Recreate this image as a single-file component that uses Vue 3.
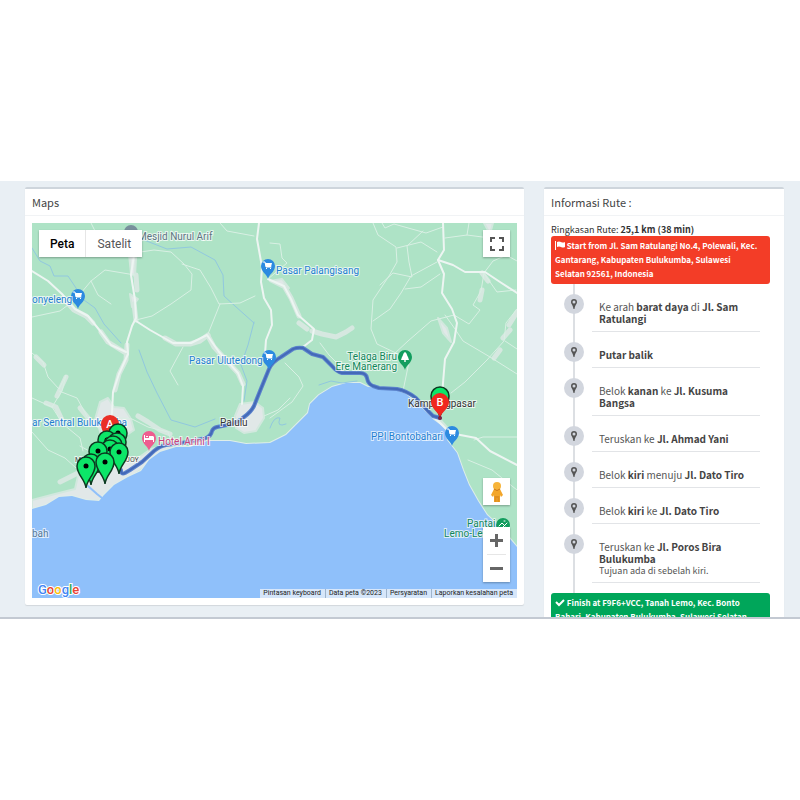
<template>
  <div class="screen">
    <main class="content">
      <section class="box">
        <h2 class="box-title">Maps</h2>
        <div class="box-body">
          <div class="map">
            <svg class="map-canvas" viewBox="32 223 485 375" preserveAspectRatio="xMidYMid slice" role="img" aria-label="Peta rute">
              <rect x="32" y="223" width="485" height="375" fill="#aee3c6" />
              <path v-for="(d, i) in urban" :key="'u' + i" :d="d" class="urban" />
              <path v-for="(d, i) in villages" :key="'v' + i" :d="d" class="village" />
              <path class="shore" :d="coast" />
              <path class="sea" :d="coast + ' L517 599 L32 599 Z'" />
              <path class="river" d="M88 486 L97 494 L102 498" />
              <path v-for="(d, i) in rivers" :key="'r' + i" :d="d" class="stream" />
              <path v-for="(d, i) in minorRoads" :key="'m' + i" :d="d" class="minor" />
              <path v-for="(d, i) in mainRoads" :key="'h' + i" :d="d" class="major" />

              <path class="route" :d="route" />
              <path class="route-core" :d="route" />

              <circle cx="131" cy="232" r="7" fill="#78909c" />
              <g v-for="p in places" :key="p.x + '-' + p.y" :transform="`translate(${p.x} ${p.y})`">
                <path d="M0 10 C-1 5 -7 3 -7 -3 A7 7 0 0 1 7 -3 C7 3 1 5 0 10 Z" :fill="p.color" />
                <template v-if="p.kind === 'shop'">
                  <path d="M-5 -7 H-3 L-2 -2 H3" class="glyph" />
                  <path d="M-3 -6 H4 L3 -2 H-2 Z M-2 -1 h1 v1 h-1 Z M2 -1 h1 v1 h-1 Z" fill="#fff" />
                </template>
                <path v-else-if="p.kind === 'hotel'" d="M-5 -6 H-4 V-3 H0 V-5 H4 L5 -4 V1 H4 V-1 H-4 V1 H-5 Z M-3 -5 H-1 V-4 H-3 Z" fill="#fff" />
                <path v-else d="M0 -8 C2 -7 2 -4 3 -3 L4 0 H.7 V2 H-.7 V0 H-4 L-3 -3 C-2 -4 -2 -7 0 -8 Z" fill="#fff" />
              </g>
              <circle cx="503" cy="525" r="7" fill="#129d5e" />
              <path d="M499 526 l3 -3 l3 3 M502 528 l5 -5 M504 521 h1" class="glyph" />

              <g class="labels">
                <text
                  v-for="l in labels"
                  :key="l.text"
                  :x="l.x"
                  :y="l.y"
                  :fill="l.color"
                  :class="{ small: l.small }"
                  :text-anchor="l.anchor || 'start'"
                >{{ l.text }}</text>
              </g>

              <g transform="translate(110 424)">
                <path :d="pinShape" fill="#ea2f26" />
                <text class="pin-letter" x="0" y="4">A</text>
              </g>
              <g v-for="(m, i) in markers" :key="'p' + i" :transform="`translate(${m[0]} ${m[1]})`">
                <path :d="pinShape" class="green-pin" />
                <circle r="2.5" />
              </g>
              <g transform="translate(440 402)">
                <path d="M0 16 C-1 10 -9 7 -9 0 A9 9 0 0 1 9 0 C9 7 1 10 0 16 Z" fill="#f0281e" />
                <text class="pin-letter" x="0" y="4">B</text>
              </g>
              <circle cx="440" cy="418" r="2" fill="#7b2440" />

              <text class="google" x="38" y="594">
                <tspan fill="#4285f4">G</tspan><tspan fill="#ea4335">o</tspan><tspan fill="#fbbc05">o</tspan><tspan fill="#4285f4">g</tspan><tspan fill="#34a853">l</tspan><tspan fill="#ea4335">e</tspan>
              </text>
            </svg>

            <div class="map-types">
              <button type="button" class="active">Peta</button>
              <button type="button">Satelit</button>
            </div>
            <button type="button" class="map-btn fullscreen" aria-label="Layar penuh">
              <svg viewBox="0 0 14 14" width="14" height="14">
                <path d="M1 5 V1 H5 M9 1 H13 V5 M13 9 V13 H9 M5 13 H1 V9" fill="none" stroke="#555" stroke-width="2" />
              </svg>
            </button>
            <button type="button" class="map-btn pegman" aria-label="Street View">
              <svg viewBox="0 0 14 22" width="14" height="22">
                <path d="M4 8 H10 L13 14 L11 16 L10 14 V21 H4 V14 L3 16 L1 14 Z" fill="#f3a62b" />
                <path d="M4.500 15 H9.500 V21 H7.500 V17 H6.500 V21 H4.500 Z" fill="#e08f21" />
                <circle cx="7" cy="5" r="4" fill="#f7b43a" />
                <path d="M4 8 Q7 11 10 8" fill="none" stroke="#c9761b" />
              </svg>
            </button>
            <div class="zoom">
              <button type="button" aria-label="Perbesar">
                <svg viewBox="0 0 13 13" width="13" height="13"><path d="M0 6.5 H13 M6.5 0 V13" stroke="#666" stroke-width="3" /></svg>
              </button>
              <button type="button" aria-label="Perkecil">
                <svg viewBox="0 0 13 13" width="13" height="13"><path d="M0 6.5 H13" stroke="#666" stroke-width="3" /></svg>
              </button>
            </div>
            <div class="attribution">
              <button type="button">Pintasan keyboard</button>
              <span>Data peta ©2023</span>
              <a href="#">Persyaratan</a>
              <a href="#">Laporkan kesalahan peta</a>
            </div>
          </div>
        </div>
      </section>

      <section class="box">
        <h2 class="box-title">Informasi Rute :</h2>
        <div class="box-body">
          <p class="summary">Ringkasan Rute: <b>25,1 km (38 min)</b></p>
          <div class="timeline">
            <div class="time-label start">
              <svg viewBox="0 0 10 9" width="10" height="9">
                <path d="M0 0 H1 V9 H0 Z M2 1 Q4 0 6 1 T10 1 V6 Q8 7 6 6 T2 6 Z" fill="currentColor" />
              </svg>
              Start from Jl. Sam Ratulangi No.4, Polewali, Kec.<br>
              Gantarang, Kabupaten Bulukumba, Sulawesi<br>
              Selatan 92561, Indonesia
            </div>
            <ol class="steps">
              <li v-for="(step, i) in steps" :key="i">
                <span class="step-icon">
                  <svg viewBox="0 0 8 10" width="8" height="10">
                    <path d="M4 0 A3 3 0 0 1 7 3 C7 5 5 6 4.500 10 H3.500 C3 6 1 5 1 3 A3 3 0 0 1 4 0 Z M4 1.500 A1.500 1.500 0 1 0 4 4.500 A1.500 1.500 0 1 0 4 1.500 Z" fill="#555" fill-rule="evenodd" />
                  </svg>
                </span>
                <div class="step-text">
                  <template v-for="(part, j) in step.parts" :key="j">
                    <b v-if="j % 2">{{ part }}</b>
                    <template v-else>{{ part }}</template>
                  </template>
                  <small v-if="step.note">{{ step.note }}</small>
                </div>
              </li>
            </ol>
            <div class="time-label finish">
              <svg viewBox="0 0 10 9" width="10" height="9">
                <path d="M1 4 L4 7 L9 2" fill="none" stroke="currentColor" stroke-width="2" />
              </svg>
              Finish at F9F6+VCC, Tanah Lemo, Kec. Bonto<br>
              Bahari, Kabupaten Bulukumba, Sulawesi Selatan
            </div>
          </div>
        </div>
      </section>
    </main>
  </div>
</template>

<script setup>
const blue = '#1f7fd1'
const green = '#12875a'

// odd entries are emphasised
const steps = [
  { parts: ['Ke arah ', 'barat daya', ' di ', 'Jl. Sam Ratulangi'] },
  { parts: ['', 'Putar balik'] },
  { parts: ['Belok ', 'kanan', ' ke ', 'Jl. Kusuma Bangsa'] },
  { parts: ['Teruskan ke ', 'Jl. Ahmad Yani'] },
  { parts: ['Belok ', 'kiri', ' menuju ', 'Jl. Dato Tiro'] },
  { parts: ['Belok ', 'kiri', ' ke ', 'Jl. Dato Tiro'] },
  { parts: ['Teruskan ke ', 'Jl. Poros Bira Bulukumba'], note: 'Tujuan ada di sebelah kiri.' }
]

const pinShape = 'M0 22 C-1 13 -9 9 -9 0 A9 9 0 0 1 9 0 C9 9 1 13 0 22 Z'

const markers = [
  [118, 433], [107, 440], [117, 442], [113, 445], [110, 449],
  [98, 451], [119, 452], [91, 463], [105, 462], [86, 466],
  [440, 396]
]

const places = [
  { x: 268, y: 269, kind: 'shop', color: '#2c8ae0' },
  { x: 78, y: 299, kind: 'shop', color: '#2c8ae0' },
  { x: 269, y: 360, kind: 'shop', color: '#2c8ae0' },
  { x: 452, y: 436, kind: 'shop', color: '#2c8ae0' },
  { x: 149, y: 441, kind: 'hotel', color: '#ee5d8f' },
  { x: 405, y: 360, kind: 'park', color: '#129d5e' }
]

const labels = [
  { text: 'Mesjid Nurul Arif', x: 138, y: 240, color: '#5d7482' },
  { text: 'Pasar Palangisang', x: 276, y: 274, color: blue },
  { text: 'onyeleng', x: 32, y: 303, color: blue },
  { text: 'Pasar Ulutedong', x: 189, y: 364, color: blue },
  { text: 'Telaga Biru', x: 397, y: 360, color: green, anchor: 'end' },
  { text: 'Ere Manerang', x: 397, y: 370, color: green, anchor: 'end' },
  { text: 'ar Sentral Bulukumba', x: 32, y: 426, color: blue },
  { text: 'Palulu', x: 220, y: 426, color: '#333' },
  { text: 'Hotel Arini I', x: 158, y: 445, color: '#c8437c' },
  { text: 'Kampungpasar', x: 408, y: 407, color: '#333' },
  { text: 'PPI Bontobahari', x: 443, y: 440, color: blue, anchor: 'end' },
  { text: 'Pantai', x: 467, y: 527, color: green },
  { text: 'Lemo-Lemo', x: 444, y: 537, color: green },
  { text: 'MATTOANGING JOY', x: 75, y: 462, color: '#444', small: true },
  { text: 'bah', x: 32, y: 537, color: '#56799a' }
]

const coast = 'M32 509 L46 505 L59 497 L72 496 L86 500 L99 501 L104 495 L114 485 L128 477 L141 471 L149 460 L160 452 L176 447 L190 447 L207 441 L230 441 L246 444 L270 443 L286 435 L296 425 L308 413 L310 404 L319 395 L332 387 L346 383 L360 383 L368 387 L390 388 L406 394 L421 407 L434 420 L445 428 L447 440 L457 453 L463 470 L469 485 L478 501 L487 515 L500 527 L517 547'

const route = 'M121 470 Q121 475 125 473 L130 470 L142 462 L154 451 Q160 446 166 445 L188 442 L206 438 Q211 436 212 431 Q213 428 217 427 L232 424 Q240 421 244 417 Q251 412 254 406 L260 391 L269 369 Q272 362 281 357 L293 349 Q298 347 303 348 L312 354 L323 357 L332 366 Q337 372 342 373 H360 Q366 373 367 378 Q368 384 373 386 L379 388 L397 389 Q407 391 416 398 L428 411 L433 416 L440 418'

const urban = [
  'M100 402 L108 398 L114 407 L124 408 L131 419 L134 430 L124 437 L116 450 L103 442 L99 428 L94 423 Z',
  'M240 404 L255 402 L263 408 L264 418 L256 431 L244 433 L236 428 L235 416 Z',
  'M32 500 L55 494 L75 489 L80 467 L96 455 L125 455 L132 462 L151 449 L180 442 L165 451 L130 478 L103 501 L60 500 L32 512 Z',
  'M129 254 L136 258 L135 276 L131 274 Z',
  'M130 294 L138 299 L132 307 Z',
  'M438 318 L447 328 L451 342 L443 333 Z',
  'M270 281 L282 279 L289 288 L282 287 Z',
  'M484 223 L493 223 L490 234 Z',
  'M434 418 L438 417 L451 432 L449 436 Z'
]

// built-up strips along the roads
const villages = [
  'M165 338 L176 344 L190 344 L200 341 L208 335',
  'M208 336 L214 347 L226 360 L238 373 L243 384',
  'M299 323 L307 329 M312 331 L322 334 L336 337 L346 332 L352 328',
  'M65 300 L74 310 L86 316 L93 323',
  'M101 332 L108 342 L124 352',
  'M127 345 L126 360 L119 374 L115 390',
  'M138 416 L148 422 L160 430 L170 434',
  'M36 357 L44 365 M57 396 L66 377',
  'M46 403 L56 407 L62 420 M80 408 L93 424',
  'M136 275 L137 290 M134 304 L136 320',
  'M284 286 L291 298 L299 316',
  'M482 273 L488 281 M482 290 L480 300',
  'M503 338 L510 330 M500 350 L494 358',
  'M517 312 L509 325',
  'M60 482 L80 472'
]

const mainRoads = [
  'M134 255 L131 275 L135 300 L136 318 L132 326 L127 342 L128 354 L119 374 L113 392 L112 413 L109 428',
  'M32 271 L48 281 L62 294 L75 309 L88 316 L101 332 L111 345 L126 352',
  'M136 321 L150 330 L173 343 L191 343 L207 335 L219 352 L238 373 L243 386 L242 404',
  'M259 223 L257 239 L262 267 L261 282 L264 298 L271 310 L272 325 L266 340 L265 354',
  'M268 279 L284 286 L291 299 L298 315 L314 329 L312 340 L303 347',
  'M443 223 L444 250 L438 260 L444 274 L442 293 L452 309 L457 323 L454 342 L445 359 L443 383 L441 417',
  'M438 260 L453 265 L465 272 L485 272 L500 282 L517 293',
  'M434 417 L450 433 L476 438 L490 451 L517 465'
]

const minorRoads = [
  'M91 223 L99 239 L118 252',
  'M134 253 L154 250 L171 252 L184 264 L192 274 L191 290 L171 304 L152 316 L136 320',
  'M182 264 L200 270 L211 288 L219 304 L240 303 L255 296',
  'M220 304 L214 319 L208 334',
  'M135 275 L105 270 L91 281 L76 299 L60 311 L32 317',
  'M91 281 L98 295 L111 304',
  'M32 353 L43 362 L48 377 L59 389 L66 375 L62 391 L52 407 L32 398',
  'M59 391 L77 398 L89 420 L101 429',
  'M32 432 L48 450 L65 458 L76 468',
  'M52 407 L63 424 L80 438 L83 451',
  'M111 417 L132 419 L148 427 L168 432 L173 446',
  'M183 347 L170 371 L178 385',
  'M220 223 L227 231 L254 236',
  'M270 243 L280 244 L282 258 L287 263 L268 279',
  'M373 223 L378 235 L396 247 L397 262 L389 276 L373 300 L371 329 L377 344 L398 354 L409 362 L403 391',
  'M373 321 L390 309 L401 293 L411 276 L437 262',
  'M382 223 L385 228 L394 224 L426 233 L443 227',
  'M397 248 L421 242 L437 252',
  'M423 231 L407 246 L409 262 L412 277 L393 273 L380 285',
  'M405 289 L421 287 L440 274',
  'M445 238 L467 235 L490 238 L506 255 L517 261',
  'M469 223 L467 235',
  'M484 273 L493 261 L509 254',
  'M484 273 L481 291 L473 305 L480 310 L469 324 L454 315 L431 321 L408 341 L394 354',
  'M483 272 L497 292 L516 290',
  'M445 315 L455 329 L463 341 L490 357 L517 374',
  'M451 393 L465 382 L487 360 L504 341 L506 323 L517 309',
  'M505 341 L517 349',
  'M285 363 L299 377 L303 386 L292 402 L270 418',
  'M517 437 L483 437 L474 440',
  'M468 460 L492 470 L517 490',
  'M264 416 L278 410 L290 398',
  'M320 343 L329 355 L337 363',
  'M80 446 L93 453 L108 460 L130 458'
]

const rivers = [
  'M32 248 L40 261 L50 266 L54 276 L68 276 L76 288 L84 300 L95 308 L104 324 L121 343',
  'M144 240 L167 249 L191 247 L215 260 L223 275 L224 296 L235 306 L254 323',
  'M254 322 L248 345 L241 365 L247 381 L244 401',
  'M139 350 L147 372 L157 393 L171 420 L195 427 L215 419',
  'M319 385 L331 381 L342 383 L357 381',
  'M270 428 Q274 416 280 418 Q276 428 286 424'
]
</script>

<style>
body {
  background: #ffffff;
}
</style>

<style scoped>
.screen {
  min-height: 100vh;
  display: grid;
  align-content: center;
  font-family: "Source Sans Pro", "Noto Sans CJK SC", sans-serif;
  color: #333333;
}

.content {
  box-sizing: border-box;
  display: grid;
  grid-template-columns: 499fr 240fr;
  align-items: start;
  gap: 20px;
  max-height: 438px;
  padding: 6px 16px 0 25px;
  overflow: hidden;
  background: #e9eff4;
  border-bottom: 2px solid #c3c9d2;
}

.box {
  background: #ffffff;
  border-top: 2px solid #ced5dc;
  border-radius: 2px;
  box-shadow: 0 1px 1px rgba(0, 0, 0, 0.1);
}

.box-title {
  margin: 0;
  padding: 0 7px;
  font-size: 11px;
  line-height: 26px;
  font-weight: 400;
  color: #444444;
  border-bottom: 1px solid #f1f3f5;
}

.box-body {
  padding: 7px;
}

.map {
  position: relative;
  height: 375px;
  overflow: hidden;
  font-family: Roboto, sans-serif;
}

.map-canvas {
  display: block;
  width: 100%;
  height: 100%;
}

.urban {
  fill: #e1e8e8;
  stroke: #d2e8de;
  stroke-width: 2;
  stroke-linejoin: round;
}

.village,
.shore,
.minor,
.major,
.river,
.stream,
.route,
.route-core,
.glyph {
  fill: none;
  stroke-linejoin: round;
  stroke-linecap: round;
}

.village {
  stroke: #d6e8e0;
  stroke-width: 5;
}

.shore {
  stroke: #dfeee9;
  stroke-width: 2;
}

.sea {
  fill: #8fc0fa;
}

.river {
  stroke: #8fc0fa;
  stroke-width: 2;
}

.stream {
  stroke: #91c8df;
  stroke-width: 1;
}

.minor {
  stroke: #d9f0e4;
  stroke-width: 1;
}

.major {
  stroke: #edf5f2;
  stroke-width: 2;
}

.route {
  stroke: #5b83cc;
  stroke-width: 4;
}

.route-core {
  stroke: #4469b8;
  stroke-width: 2;
}

.glyph {
  stroke: #ffffff;
  stroke-width: 1;
}

.labels text {
  font-size: 10px;
  paint-order: stroke;
  stroke: rgba(255, 255, 255, 0.7);
  stroke-width: 2px;
}

.labels .small {
  font-size: 7px;
}

.green-pin {
  fill: #0ce668;
  stroke: #0c3a20;
  stroke-width: 1.5;
}

.pin-letter {
  font-size: 11px;
  font-weight: 500;
  fill: #ffffff;
  text-anchor: middle;
}

.google {
  font-size: 13px;
  font-weight: 500;
  paint-order: stroke;
  stroke: #ffffff;
  stroke-width: 2px;
}

.map button {
  border: 0;
  padding: 0;
  background: #ffffff;
  font-family: inherit;
  cursor: pointer;
}

.map .map-types {
  position: absolute;
  top: 7px;
  left: 7px;
  display: flex;
  box-shadow: 0 1px 2px rgba(0, 0, 0, 0.3);
}

.map .map-types button {
  height: 27px;
  padding: 0 11px;
  font-size: 12px;
  color: #565656;
}

.map .map-types button.active {
  font-weight: 500;
  color: #000000;
  border-right: 1px solid #e6e6e6;
}

.map-btn,
.zoom {
  position: absolute;
  right: 7px;
  width: 27px;
  box-shadow: 0 1px 2px rgba(0, 0, 0, 0.3);
}

.map-btn {
  height: 27px;
  display: grid;
  place-items: center;
}

.fullscreen {
  top: 7px;
}

.pegman {
  bottom: 93px;
}

.zoom {
  bottom: 16px;
  display: grid;
  background: #ffffff;
}

.zoom button {
  height: 27px;
  display: grid;
  place-items: center;
}

.map .zoom button + button {
  height: 28px;
  margin: 0 4px;
  border-top: 1px solid #e6e6e6;
}

.attribution {
  position: absolute;
  right: 0;
  bottom: 0;
  display: flex;
  font-size: 7px;
  line-height: 9px;
  color: #222222;
}

.map .attribution > * {
  padding: 0 4px 0 3px;
  background: rgba(238, 243, 249, 0.75);
  font-size: 7px;
  line-height: 9px;
  color: inherit;
  text-decoration: none;
  white-space: nowrap;
}

.map .attribution > * + * {
  border-left: 1px solid #9fb4cc;
}

.summary {
  margin: 0;
  font-size: 9px;
  line-height: 13px;
}

.timeline {
  position: relative;
  padding-right: 7px;
}

.timeline::before {
  content: "";
  position: absolute;
  top: 0;
  bottom: 0;
  left: 22px;
  width: 2px;
  background: #dcdfe3;
}

.time-label {
  position: relative;
  padding: 3px 4px;
  border-radius: 3px;
  color: #ffffff;
  font-size: 8px;
  line-height: 14px;
  font-weight: 700;
  white-space: nowrap;
}

.time-label svg {
  vertical-align: -1px;
}

.start {
  background: #f33d27;
}

.finish {
  background: #00a65a;
}

.steps {
  position: relative;
  display: grid;
  gap: 10px;
  margin: 10px 0;
  padding: 0 10px 0 13px;
  list-style: none;
}

.steps li {
  display: grid;
  grid-template-columns: 20px 1fr;
  gap: 8px;
}

.step-icon {
  display: grid;
  place-items: center;
  width: 20px;
  height: 20px;
  border-radius: 50%;
  background: #d2d6de;
}

.step-text {
  padding: 7px 7px 6px;
  border-bottom: 1px solid #e2e4e7;
  font-size: 10px;
  line-height: 12px;
  color: #555555;
}

.step-text b {
  color: #444444;
}

.step-text small {
  display: block;
  font-size: 9px;
  line-height: 11px;
}
</style>
